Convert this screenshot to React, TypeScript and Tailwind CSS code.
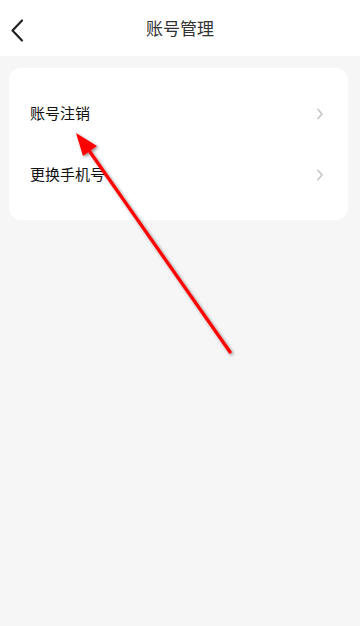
const items = ['账号注销', '更换手机号'];

export default function App() {
  return (
    <div
      className="relative w-[360px] h-[626px] bg-[#f6f6f6] overflow-hidden"
      style={{ fontFamily: '"Noto Sans CJK SC", "Noto Sans", sans-serif' }}
    >
      <header className="h-[56px] bg-white flex items-center relative">
        <button className="w-[40px] h-full flex items-center text-[#222]">
          <svg width="40" height="56" viewBox="0 0 40 56" fill="none">
            <polyline points="22,20.5 12.5,30.5 22,40.5" stroke="currentColor" strokeWidth="2.2" strokeLinecap="round" strokeLinejoin="round" />
          </svg>
        </button>
        <h1 className="absolute left-0 right-0 text-center text-[17px] text-[#333] pointer-events-none">
          账号管理
        </h1>
      </header>

      <div className="ml-[9px] mr-[12px] mt-[12px] bg-white rounded-[12px] py-[15px]">
        {items.map((label) => (
          <div key={label} className="h-[61px] flex items-center justify-between pl-[21px] pr-[24px]">
            <span className="text-[15px] text-[#111]">{label}</span>
            <svg width="8" height="12" viewBox="0 0 8 12" fill="none">
              <polyline points="2,1.5 6,6 2,10.5" stroke="#c8c8c8" strokeWidth="1.8" strokeLinecap="round" strokeLinejoin="round" />
            </svg>
          </div>
        ))}
      </div>

      {/* annotation arrow drawn over the screenshot */}
      <svg className="absolute inset-0 pointer-events-none" width="360" height="626" viewBox="0 0 360 626">
        <defs>
          <filter id="sh" x="-20%" y="-20%" width="140%" height="140%">
            <feDropShadow dx="1.5" dy="1.5" stdDeviation="1.5" floodColor="#000" floodOpacity="0.45" />
          </filter>
        </defs>
        <g filter="url(#sh)">
          <line x1="230" y1="352" x2="88" y2="149" stroke="#ff0000" strokeWidth="3.2" strokeLinecap="round" />
          <polygon points="76,133 97,146 83,156" fill="#ff0000" />
        </g>
      </svg>
    </div>
  );
}
